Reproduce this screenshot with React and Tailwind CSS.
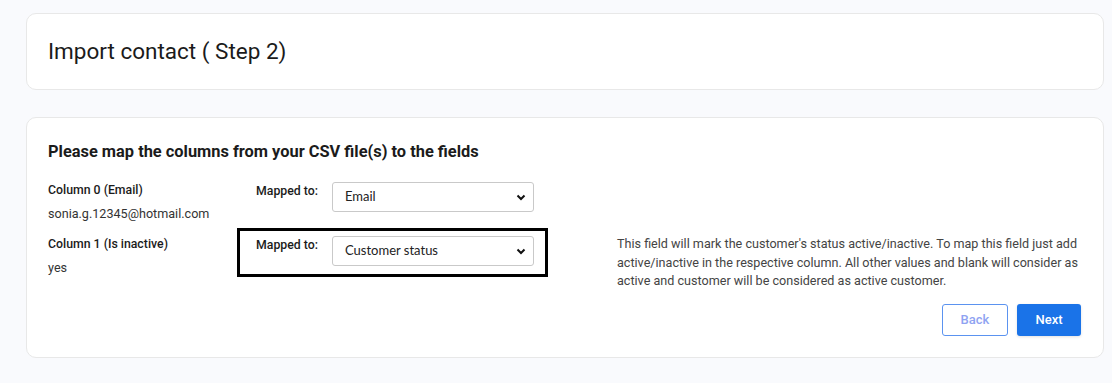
import { useState } from "react";

const Chevron = () => (
  <svg width="10" height="7" viewBox="0 0 10 7" className="pointer-events-none absolute right-[8px] top-[12px]">
    <polyline points="1.5,1.5 5,5 8.5,1.5" fill="none" stroke="#111" strokeWidth="2" />
  </svg>
);

const MapSelect = ({ value, onChange, options }) => (
  <div className="relative w-[202px] shrink-0">
    <select
      value={value}
      onChange={(e) => onChange(e.target.value)}
      className="h-[30px] w-full appearance-none rounded-[3px] border border-[#c9c9c9] bg-white pl-[12px] pr-6 text-[13px] text-[#222] outline-none"
      style={{ fontFamily: "Lato, 'Open Sans', sans-serif" }}
    >
      {options.map((o) => (
        <option key={o} value={o}>{o}</option>
      ))}
    </select>
    <Chevron />
  </div>
);

const fields = ["Email", "Customer status", "First name", "Last name", "Phone", "Do not import"];

const App = () => {
  const [emailField, setEmailField] = useState("Email");
  const [statusField, setStatusField] = useState("Customer status");

  return (
    <div
      className="min-h-[383px] bg-[#f9fafd] pl-[26px] pr-[8px] pt-[13px] text-[#222]"
      style={{ fontFamily: "Roboto, 'Liberation Sans', sans-serif" }}
    >
      {/* header card */}
      <div className="flex h-[77px] items-center rounded-[10px] border border-[#e8e8e8] bg-white pl-[21px]">
        <h1 className="text-[22.5px] font-normal leading-none text-[#1b1b1b]">Import contact ( Step 2)</h1>
      </div>

      {/* mapping card */}
      <div className="mt-[27px] rounded-[10px] border border-[#e8e8e8] bg-white pb-[21px] pl-[21px] pr-[22px] pt-[22px]">
        <h2 className="text-[16.4px] font-bold leading-[24px] text-[#1b1b1b]">
          Please map the columns from your CSV file(s) to the fields
        </h2>

        <div className="mt-[10px] flex items-start">
          <div className="w-[189px] shrink-0 pt-[7px] text-[12.3px] leading-[18px]">
            <div className="font-medium text-[#1b1b1b]">Column 0 (Email)</div>
            <div className="mt-[6px] text-[12.6px] text-[#333]">sonia.g.12345@hotmail.com</div>
          </div>
          <div className="flex w-[311px] shrink-0 items-start border-[3px] border-transparent pb-[8px] pl-[16px] pr-[11px] pt-[5px]">
            <div className="w-[76px] shrink-0 text-[12.3px] font-medium leading-[18px] text-[#1b1b1b]">Mapped to:</div>
            <MapSelect value={emailField} onChange={setEmailField} options={fields} />
          </div>
        </div>

        <div className="mt-[5px] flex items-start">
          <div className="w-[189px] shrink-0 pt-[7px] text-[12.3px] leading-[18px]">
            <div className="font-medium text-[#1b1b1b]">Column 1 (Is inactive)</div>
            <div className="mt-[6px] text-[12.6px] text-[#333]">yes</div>
          </div>
          <div className="flex w-[311px] shrink-0 items-start border-[3px] border-black pb-[8px] pl-[16px] pr-[11px] pt-[5px]">
            <div className="w-[76px] shrink-0 text-[12.3px] font-medium leading-[18px] text-[#1b1b1b]">Mapped to:</div>
            <MapSelect value={statusField} onChange={setStatusField} options={fields} />
          </div>
          <p className="ml-[69px] w-[480px] pt-[7px] text-[12.6px] leading-[18.5px] text-[#444]">
            This field will mark the customer's status active/inactive. To map this field just add
            active/inactive in the respective column. All other values and blank will consider as
            active and customer will be considered as active customer.
          </p>
        </div>

        <div className="mt-[13px] flex justify-end gap-[9px]">
          <button className="h-[32px] w-[66px] rounded-[3px] border border-[#5b93f0] bg-white text-[13px] font-medium text-[#8fa3f2]">
            Back
          </button>
          <button className="h-[32px] w-[64px] rounded-[3px] bg-[#1a73e8] text-[13px] font-medium text-white shadow-[0_1px_3px_rgba(0,0,0,0.12)]">
            Next
          </button>
        </div>
      </div>
    </div>
  );
};

export default App;
